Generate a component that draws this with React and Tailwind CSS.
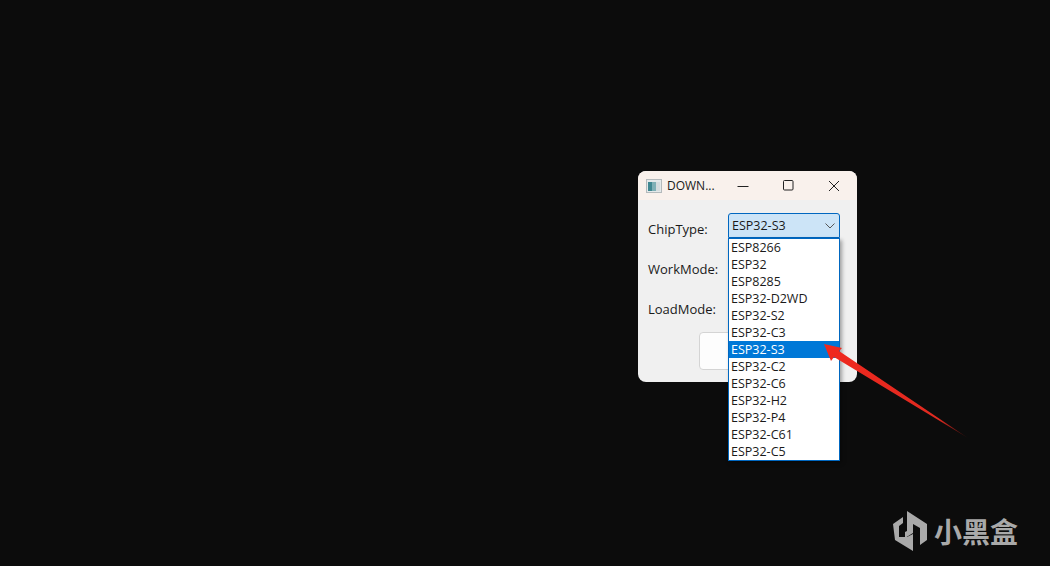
import React from 'react';

const chips = ['ESP8266', 'ESP32', 'ESP8285', 'ESP32-D2WD', 'ESP32-S2', 'ESP32-C3', 'ESP32-S3', 'ESP32-C2', 'ESP32-C6', 'ESP32-H2', 'ESP32-P4', 'ESP32-C61', 'ESP32-C5'];
const labels = ['ChipType:', 'WorkMode:', 'LoadMode:'];

const AppIcon = () => (
  <svg width="16" height="14" viewBox="0 0 16 14">
    <rect x="0.5" y="0.5" width="15" height="13" fill="#e4e9ea" stroke="#b4babc" />
    <rect x="2" y="3" width="4" height="9" fill="#3f8791" />
    <rect x="6" y="3" width="4" height="9" fill="#7fb0b6" />
    <rect x="10" y="3" width="4" height="9" fill="#d5dcde" />
  </svg>
);

const Logo = () => (
  <svg width="34" height="42" viewBox="0 0 34 42">
    <path d="M14 1 L34 14 V30 L27 35 V18 L20 14 V23 L12 28 V22 L14 21 Z" fill="#a9a9a9" />
    <path d="M0 14 L10 7 V13 L6 16 V27 L14 27 L20 24 V41 L2 30 Z" fill="#a9a9a9" />
  </svg>
);

const App = () => {
  return (
    <div className="relative h-[566px] w-[1050px] overflow-hidden bg-[#0c0c0c] font-['Open_Sans','Noto_Sans',sans-serif] text-[12.5px] text-[#1a1a1a]">
      {/* Dialog window */}
      <div className="absolute left-[638px] top-[171px] h-[211px] w-[219px] overflow-hidden rounded-lg bg-[#f0f0f0]">
        <div className="flex h-[29px] items-center bg-[#f9f1ec] pl-2">
          <AppIcon />
          <span className="ml-[5px] w-[60px] text-[12px]">DOWN...</span>
          <svg className="ml-[10px]" width="12" height="12" viewBox="0 0 12 12">
            <path d="M0.5 6.5 H11.5" stroke="#222" />
          </svg>
          <svg className="ml-[34px]" width="11" height="11" viewBox="0 0 11 11">
            <rect x="0.5" y="0.5" width="9.5" height="9.5" rx="1" fill="none" stroke="#222" />
          </svg>
          <svg className="ml-[34px]" width="12" height="12" viewBox="0 0 12 12">
            <path d="M1 1 L11 11 M11 1 L1 11" stroke="#222" />
          </svg>
        </div>
        <div className="flex flex-col gap-[22px] pl-[10px] pt-[20px] text-[13px]">
          {labels.map((label) => (
            <div key={label} className="h-[18px] leading-[18px]">{label}</div>
          ))}
        </div>
        <div className="absolute left-[61px] top-[161px] h-[38px] w-[80px] rounded border border-[#d4d4d4] bg-[#fdfdfd]"></div>
      </div>

      {/* Combo box */}
      <div className="absolute left-[728px] top-[213px] flex h-[25px] w-[112px] items-center justify-between rounded-t-[3px] border border-[#0067c0] bg-[#cce4f7] pl-[3px] pr-[4px] pt-px">
        <span>ESP32-S3</span>
        <svg width="10" height="6" viewBox="0 0 10 6">
          <path d="M0.5 0.5 L5 5 L9.5 0.5" fill="none" stroke="#555" />
        </svg>
      </div>

      {/* Dropdown list */}
      <div className="absolute left-[728px] top-[238px] w-[112px] border border-[#0067c0] bg-white shadow-[2px_2px_4px_rgba(0,0,0,0.35)]">
        {chips.map((chip) => (
          <div
            key={chip}
            className={`h-[17px] pl-[2px] leading-[17px] ${chip === 'ESP32-S3' ? 'bg-[#0078d7] text-white' : ''}`}
          >
            {chip}
          </div>
        ))}
      </div>

      {/* Red arrow annotation */}
      <svg className="absolute left-[815px] top-[335px]" width="160" height="110" viewBox="0 0 160 110">
        <defs>
          <linearGradient id="tail" gradientUnits="userSpaceOnUse" x1="9" y1="10" x2="153" y2="103">
            <stop offset="0" stopColor="#f0281e" />
            <stop offset="0.8" stopColor="#e02a20" />
            <stop offset="1" stopColor="#2a0b0a" />
          </linearGradient>
        </defs>
        <path d="M9 9 L27 13 L24 16 L153 103 L19 22 L16 26 Z" fill="url(#tail)" />
      </svg>

      {/* Watermark */}
      <div className="absolute left-[893px] top-[510px] flex items-center gap-[7px]">
        <Logo />
        <span className="font-['Noto_Sans_CJK_SC',sans-serif] text-[28px] font-bold leading-[42px] text-[#a9a9a9]">小黑盒</span>
      </div>
    </div>
  );
};

export default App;
